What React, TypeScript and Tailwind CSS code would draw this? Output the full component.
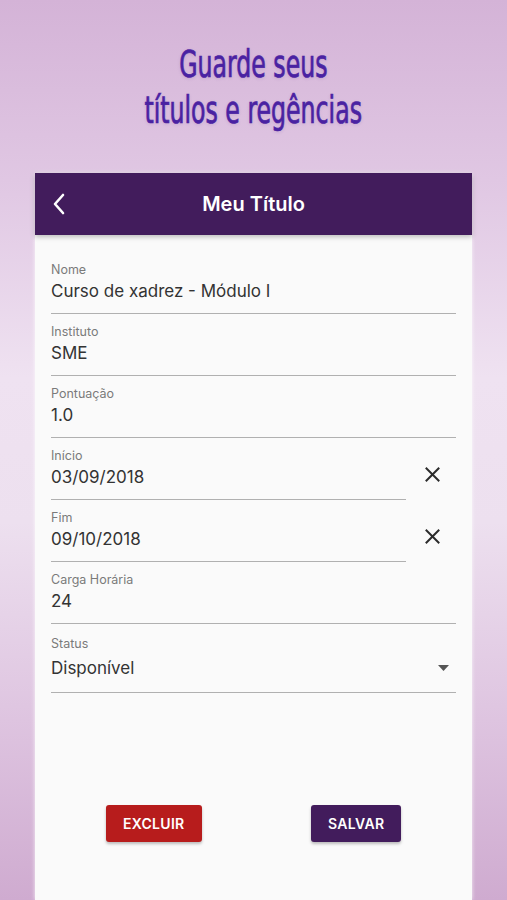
import React from "react";

const Field = ({ label, value, short, onClear }: { label: string; value: string; short?: boolean; onClear?: boolean }) => (
  <div className="flex items-start">
    <div className={`${short ? "w-[355px]" : "flex-1"} h-[62px] border-b border-[#b0b0b0] pt-[10px]`}>
      <div className="text-[12.5px] leading-[16px] text-[#7a7a7a]">{label}</div>
      <div className="mt-[2px] text-[17px] leading-[22px] text-[#333333]">{value}</div>
    </div>
    {onClear && (
      <div className="flex-1 flex justify-center pt-[29px] pl-[2px]">
        <svg width="15" height="15" viewBox="0 0 15 15" fill="none">
          <path d="M1.5 1.5 L13.5 13.5 M13.5 1.5 L1.5 13.5" stroke="#2b2b2b" strokeWidth="2" strokeLinecap="square" />
        </svg>
      </div>
    )}
  </div>
);

export default function App() {
  return (
    <div
      className="w-[507px] h-[900px] overflow-hidden flex flex-col"
      style={{ fontFamily: "Inter, 'Noto Sans', sans-serif" }}
    >
      <div className="flex-1 flex flex-col bg-[linear-gradient(180deg,#d4b3d7_0%,#e0c7e3_20%,#efe2f1_42%,#ede0ef_58%,#dec4e0_80%,#cfabd0_100%)]">
        <div
          className="pt-[42px] h-[173px] flex flex-col items-center text-[#4a22a2] text-[37px] leading-[46px] font-normal [-webkit-text-stroke:0.7px_#4a22a2] [text-shadow:0_1px_4px_rgba(80,40,140,0.18)]"
          style={{ fontFamily: "'DejaVu Sans Condensed', sans-serif" }}
        >
          <div className="[transform:scaleX(0.71)] whitespace-nowrap">Guarde seus</div>
          <div className="[transform:scaleX(0.71)] whitespace-nowrap">títulos e regências</div>
        </div>
        <div className="mx-[35px] flex-1 flex flex-col bg-[#fafafa] shadow-[0_0_4px_rgba(255,255,255,0.8)]">
          <div className="h-[62px] bg-[#421c5c] flex items-center relative shadow-[0_2px_5px_rgba(0,0,0,0.25)]">
            <svg className="absolute left-[17px]" width="14" height="22" viewBox="0 0 14 22" fill="none">
              <path d="M11 2 L3 11 L11 20" stroke="white" strokeWidth="2.6" strokeLinecap="round" strokeLinejoin="round" />
            </svg>
            <div className="flex-1 text-center text-white text-[20px] font-semibold">Meu Título</div>
          </div>
          <div className="px-[16px] pt-[17px] flex flex-col">
            <Field label="Nome" value="Curso de xadrez - Módulo I" />
            <Field label="Instituto" value="SME" />
            <Field label="Pontuação" value="1.0" />
            <Field label="Início" value="03/09/2018" short onClear />
            <Field label="Fim" value="09/10/2018" short onClear />
            <Field label="Carga Horária" value="24" />
            <div className="h-[69px] border-b border-[#b0b0b0] pt-[12px]">
              <div className="text-[12.5px] leading-[16px] text-[#7a7a7a]">Status</div>
              <div className="mt-[5px] flex items-center justify-between">
                <div className="text-[17px] leading-[22px] text-[#333333]">Disponível</div>
                <svg className="mr-[7px]" width="11" height="6" viewBox="0 0 11 6">
                  <path d="M0 0 L11 0 L5.5 6 Z" fill="#555555" />
                </svg>
              </div>
            </div>
            <div className="mt-[112px] flex justify-around">
              <button className="w-[96px] h-[37px] rounded-[3px] bg-[#b71c1c] text-white text-[14px] font-semibold tracking-[0.3px] shadow-[0_2px_3px_rgba(0,0,0,0.25)]">
                EXCLUIR
              </button>
              <button className="w-[90px] h-[37px] rounded-[3px] bg-[#421c5c] text-white text-[14px] font-semibold tracking-[0.3px] shadow-[0_2px_3px_rgba(0,0,0,0.25)]">
                SALVAR
              </button>
            </div>
          </div>
        </div>
      </div>
    </div>
  );
}
